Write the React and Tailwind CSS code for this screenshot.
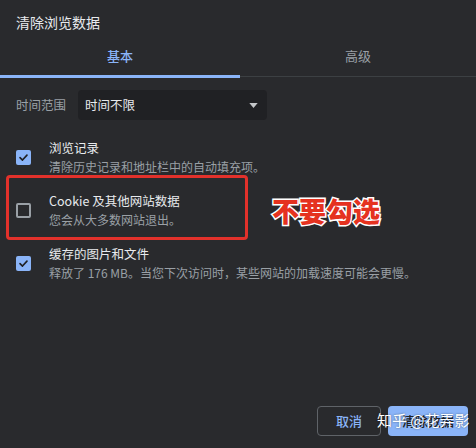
import React from "react";

const items = [
  { title: "浏览记录", desc: "清除历史记录和地址栏中的自动填充项。", checked: true },
  { title: "Cookie 及其他网站数据", desc: "您会从大多数网站退出。", checked: false, flagged: true },
  { title: "缓存的图片和文件", desc: "释放了 176 MB。当您下次访问时，某些网站的加载速度可能会更慢。", checked: true },
];

function Checkbox({ checked }) {
  if (checked) {
    return (
      <div className="flex h-[15px] w-[15px] shrink-0 items-center justify-center rounded-[2px] bg-[#8ab4f8]">
        <svg viewBox="0 0 12 12" className="h-[11px] w-[11px]" fill="none">
          <path d="M2.2 6.2 L4.9 8.8 L9.8 3.4" stroke="#202124" strokeWidth="1.8" strokeLinecap="round" strokeLinejoin="round" />
        </svg>
      </div>
    );
  }
  return <div className="h-[15px] w-[15px] shrink-0 rounded-[2px] border-2 border-[#9aa0a6]" />;
}

function Item({ item }) {
  return (
    <div className="relative flex items-center py-[6px] pl-4">
      <Checkbox checked={item.checked} />
      <div className="ml-[18px] flex flex-col">
        <div className="text-[12.5px] leading-[19px] text-[#e8eaed]">{item.title}</div>
        <div className="text-[12px] leading-[19px] text-[#9aa0a6]">{item.desc}</div>
      </div>
      {item.flagged && (
        <>
          {/* red annotation frame */}
          <div className="pointer-events-none absolute left-[6px] top-[-10px] h-[65px] w-[242px] rounded-[4px] border-[3px] border-[#e2312b]" />
          <div className="absolute left-[272px] top-[10px] text-[27px] font-black leading-[32px] text-[#e5321f] [-webkit-text-stroke:3px_#ffffff] [paint-order:stroke_fill]">
            不要勾选
          </div>
        </>
      )}
    </div>
  );
}

export default function App() {
  return (
    <div
      className="relative flex h-[448px] w-[476px] flex-col overflow-hidden bg-[#292a2d] text-[#e8eaed]"
      style={{ fontFamily: '"Noto Sans CJK SC", "Noto Sans", sans-serif' }}
    >
      <div className="px-4 pt-3 text-[14px] leading-[20px] text-[#e8eaed]">清除浏览数据</div>

      {/* tabs */}
      <div className="mt-[14px] flex">
        <div className="flex w-[240px] flex-col items-center">
          <div className="pb-[9px] text-[13px] font-medium leading-[20px] text-[#8ab4f8]">基本</div>
          <div className="h-[3px] w-full bg-[#8ab4f8]" />
        </div>
        <div className="flex flex-1 flex-col items-center">
          <div className="pb-[9px] text-[13px] leading-[20px] text-[#9aa0a6]">高级</div>
          <div className="mt-[1px] h-[1px] w-full bg-[#3c4043]" />
        </div>
      </div>

      {/* time range */}
      <div className="mt-3 flex items-center pl-4">
        <div className="w-[62px] text-[12.5px] text-[#9aa0a6]">时间范围</div>
        <div className="flex h-[30px] w-[189px] items-center justify-between rounded-[4px] bg-[#202124] pl-[7px] pr-[9px]">
          <span className="text-[12.5px] text-[#e8eaed]">时间不限</span>
          <svg viewBox="0 0 10 6" className="h-[5px] w-[9px]">
            <path d="M0 0 L10 0 L5 6 Z" fill="#c4c7ca" />
          </svg>
        </div>
      </div>

      <div className="mt-[12px] flex flex-col gap-[3px]">
        {items.map((item) => (
          <Item key={item.title} item={item} />
        ))}
      </div>

      <div className="mt-auto flex justify-end gap-[7px] pb-3 pr-2">
        <button className="h-[30px] w-[64px] rounded-[4px] border border-[#5f6368] text-[13px] font-medium text-[#8ab4f8]">取消</button>
        <button className="h-[30px] w-[80px] rounded-[4px] bg-[#8ab4f8] text-[13px] font-medium text-[#202124]">清除数据</button>
      </div>

      {/* watermark */}
      <div className="pointer-events-none absolute left-[377px] top-[409px] text-[15px] leading-[22px] text-white [text-shadow:0_0_2px_rgba(0,0,0,0.5)]">
        知乎 @花弄影
      </div>
    </div>
  );
}
